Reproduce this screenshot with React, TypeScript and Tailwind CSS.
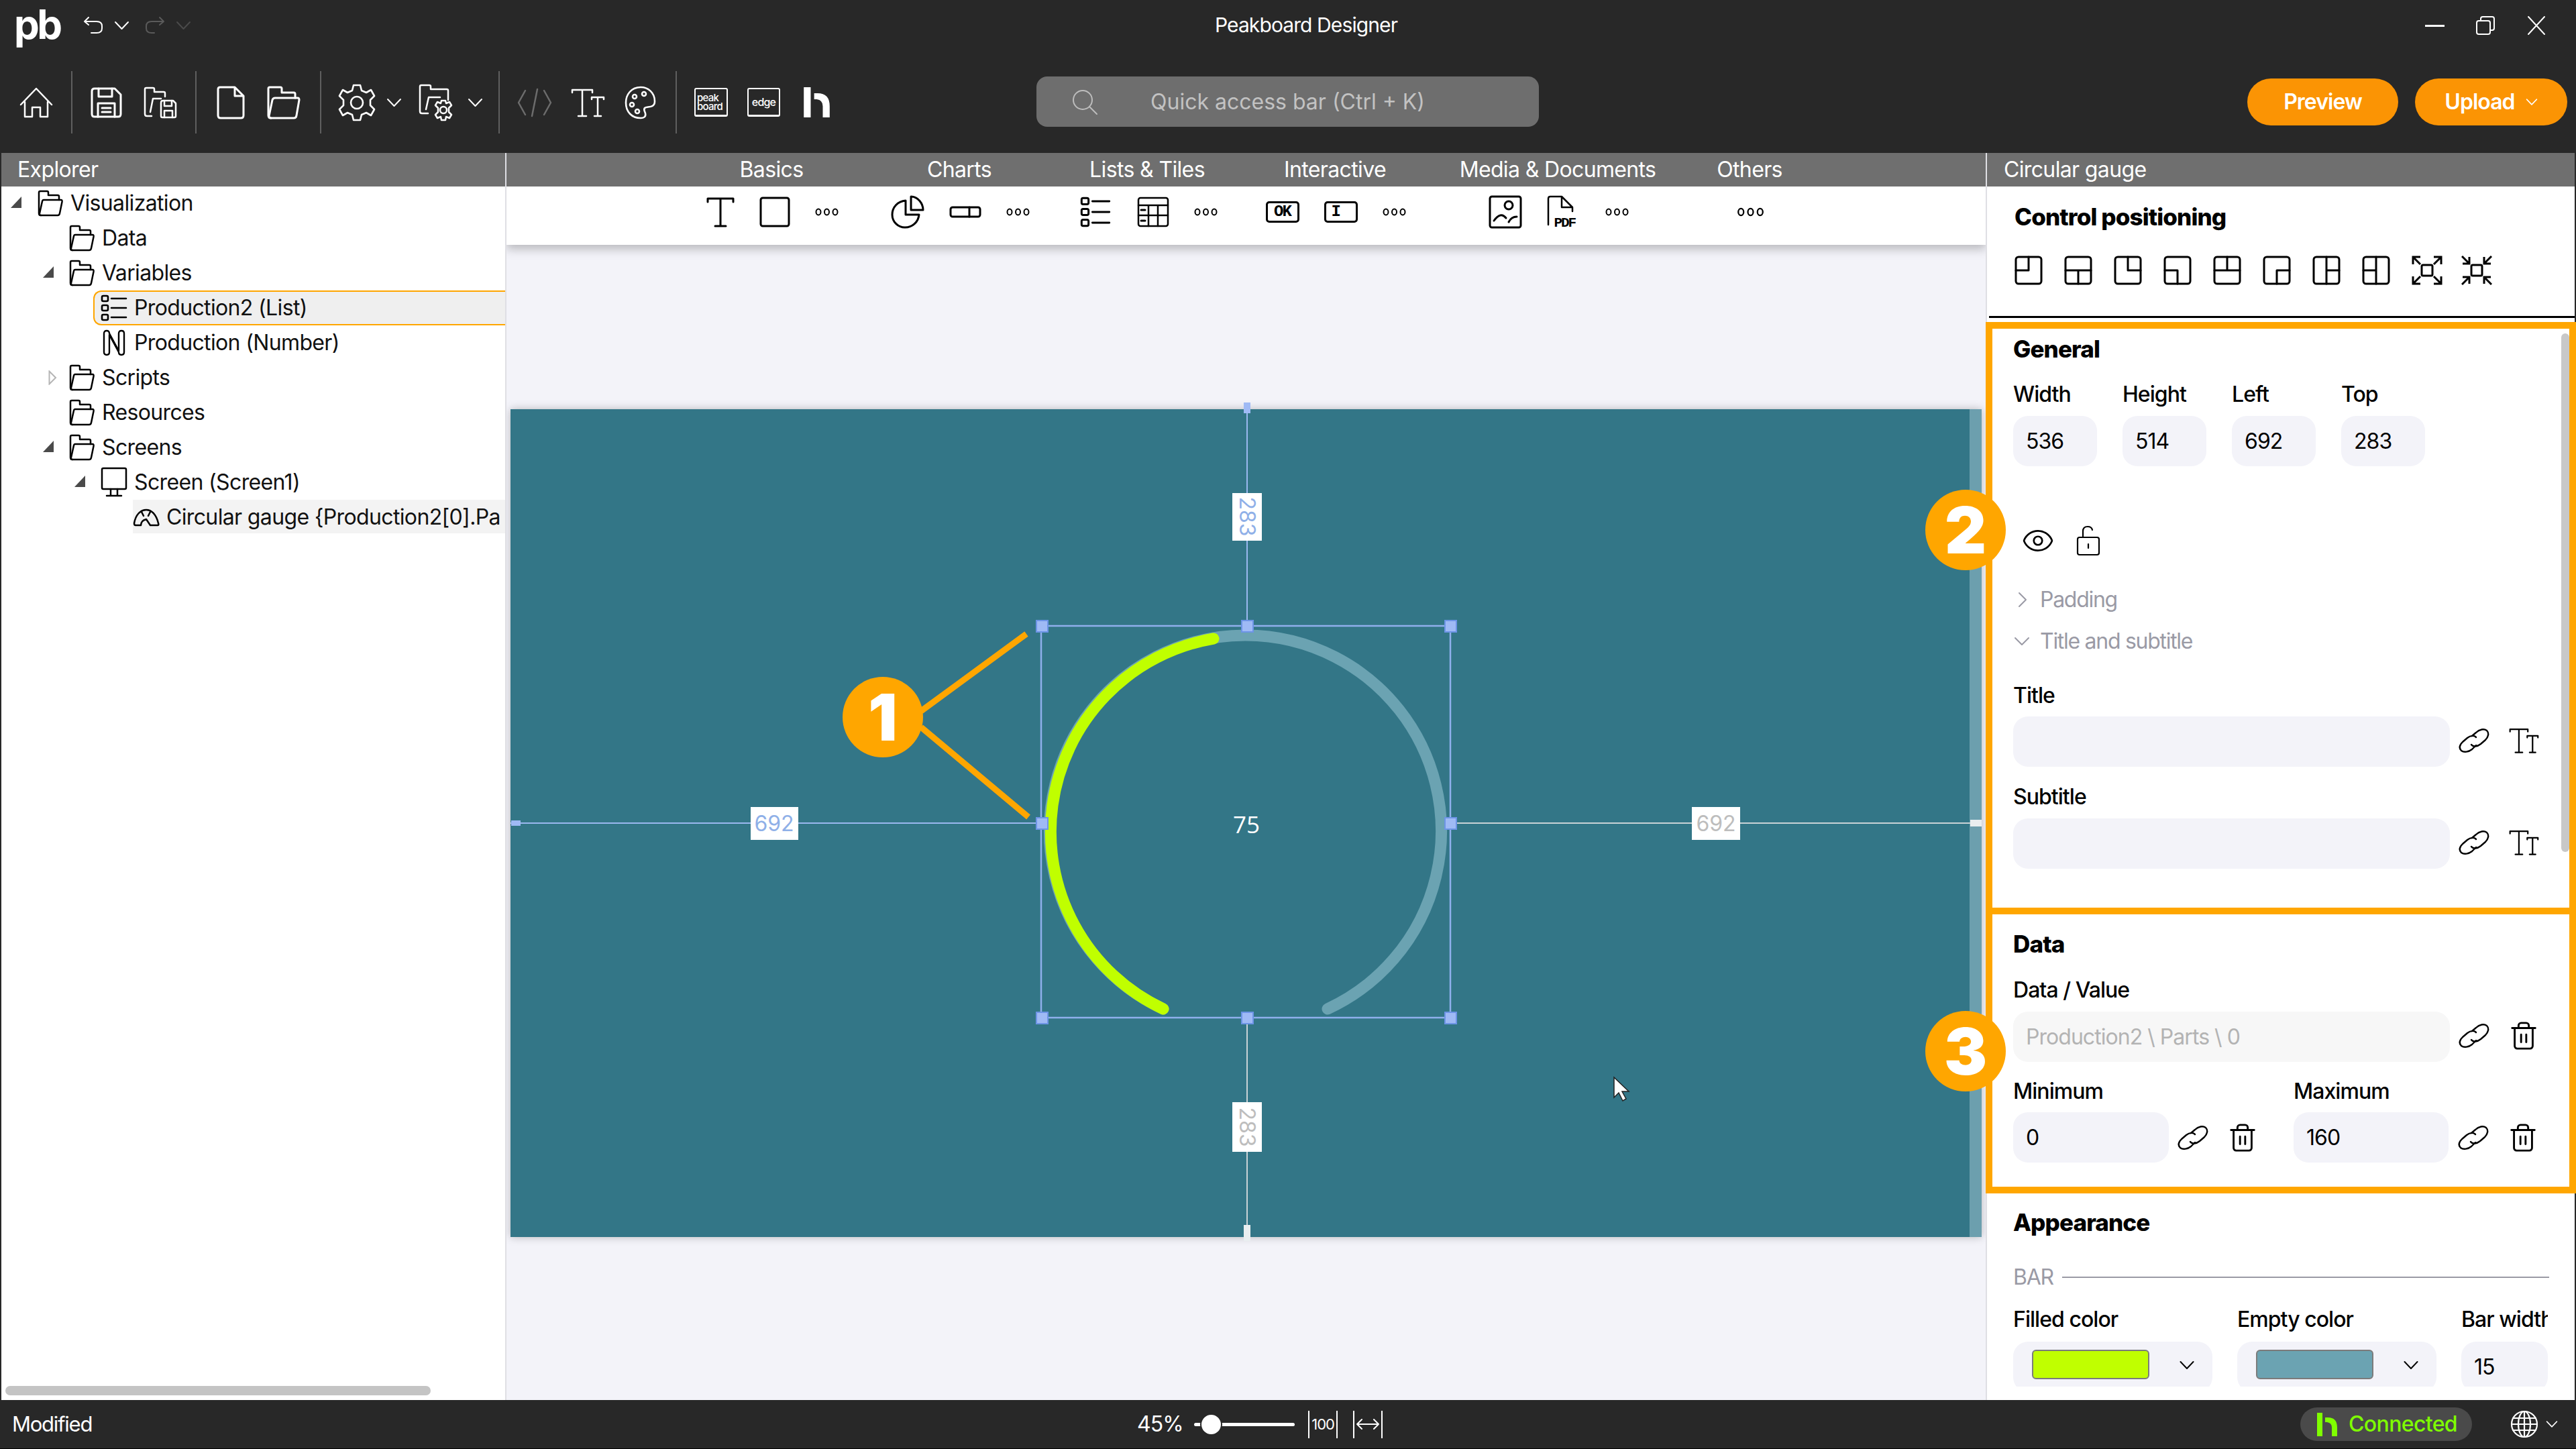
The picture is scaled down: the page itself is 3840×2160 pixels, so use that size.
import type { ReactNode } from "react";
import { Eye, Trash2 } from "lucide-react";

const font = "font-['Inter',sans-serif]";

function Ico({ w, h, vb, sw = 2.5, className, children }: { w: number; h: number; vb?: string; sw?: number; className?: string; children: ReactNode }) {
  return (
    <svg
      width={w}
      height={h}
      viewBox={vb ?? `0 0 ${w} ${h}`}
      fill="none"
      stroke="currentColor"
      strokeWidth={sw}
      strokeLinecap="round"
      strokeLinejoin="round"
      className={`shrink-0 ${className ?? ""}`}
    >
      {children}
    </svg>
  );
}

const Folder = () => (
  <Ico w={40} h={40} vb="0 0 38 40">
    <path d="M5 38Q2 38 2 35V4Q2 2 4 2H14Q16 2 16 4V8H30Q32 8 32 10V15" />
    <path d="M9 15H35Q37 15 36.5 18L33 35Q32.5 38 30 38H5Q2 38 3 35L7 17Q7.5 15 9 15Z" />
  </Ico>
);

const ListGlyph = ({ w = 40, h = 40 }: { w?: number; h?: number }) => (
  <Ico w={w} h={h} vb="0 0 40 40" sw={2.6}>
    <rect x="2" y="2" width="9" height="8" rx="2" />
    <rect x="2" y="16" width="9" height="8" rx="2" />
    <rect x="2" y="30" width="9" height="8" rx="2" />
    <path d="M16 6H38M16 20H38M16 34H38" />
  </Ico>
);

const Tt = ({ w = 52, h = 46 }: { w?: number; h?: number }) => (
  <Ico w={w} h={h} vb="0 0 52 46" sw={2.5}>
    <path d="M3 8V4H33V8M18 4V43M12 43H24M32 18V15H50V18M41 15V43M36 43H46" />
  </Ico>
);

const Chev = ({ w = 23, className }: { w?: number; className?: string }) => (
  <Ico w={w} h={14} vb="0 0 23 14" sw={2} className={className}>
    <path d="M2 2L11.5 12L21 2" />
  </Ico>
);

const Dots = ({ big }: { big?: boolean }) => (
  <Ico w={big ? 47 : 35} h={big ? 16 : 14} vb="0 0 35 14" sw={2}>
    <ellipse cx="5" cy="7" rx="3.5" ry="4.5" />
    <ellipse cx="17.5" cy="7" rx="3.5" ry="4.5" />
    <ellipse cx="30" cy="7" rx="3.5" ry="4.5" />
  </Ico>
);

const HLogo = ({ w, h, className }: { w: number; h: number; className?: string }) => (
  <svg width={w} height={h} viewBox="0 0 30 35" fill="currentColor" className={`shrink-0 ${className ?? ""}`}>
    <rect x="0" y="0" width="8" height="35" />
    <path d="M12 7H16Q30 7 30 22V35H22V22Q22 15 15 14H12Z" />
  </svg>
);

const Sep = ({ className }: { className: string }) => <div className={`h-[93px] w-[2px] shrink-0 bg-[#5f5f5f] ${className}`} />;

function TitleBar() {
  return (
    <div className="relative flex h-[228px] shrink-0 flex-col bg-[#282828] text-white">
      <div className="flex h-[76px] items-start">
        <span className={`${font} ml-[21px] mt-[2px] w-[69px] text-[60px] font-bold leading-[68px] tracking-[-0.06em]`}>pb</span>
        <Ico w={30} h={26} className="ml-[34px] mt-[24px]" sw={2}>
          <path d="M8 2L2 8L8 13M2 8H20Q28 8 28 15V18Q28 25 20 25H12" />
        </Ico>
        <Chev className="ml-[16px] mt-[31px]" />
        <Ico w={30} h={26} className="ml-[23px] mt-[24px] text-[#5a5a5a]" sw={2}>
          <path d="M22 2L28 8L22 13M28 8H10Q2 8 2 15V18Q2 25 10 25H14" />
        </Ico>
        <Chev className="ml-[16px] mt-[31px] text-[#4a4a4a]" />
        <span className={`${font} absolute left-[54px] right-0 top-[17px] text-center text-[30px] leading-[40px] tracking-[-0.03em]`}>Peakboard Designer</span>
        <div className="ml-auto mr-[44px] mt-[23px] flex items-center gap-[46px]">
          <div className="h-[3px] w-[29px] bg-white" />
          <Ico w={30} h={30} sw={2}>
            <rect x="2" y="8" width="20" height="20" rx="3" />
            <path d="M8 8V5Q8 2 11 2H25Q28 2 28 5V19Q28 22 25 22H22" />
          </Ico>
          <Ico w={30} h={30} sw={2}>
            <path d="M3 2L27 28M27 2L3 28" />
          </Ico>
        </div>
      </div>
      <div className="flex h-[152px] items-start">
        <div className="mt-[30px] flex items-center">
          <Ico w={50} h={46} className="ml-[29px]" sw={2.5} vb="0 0 50 46">
            <path d="M2 26L25 2L48 26M8 22V44H19V30H31V44H42V22" />
          </Ico>
          <Sep className="ml-[27px]" />
          <Ico w={47} h={46} className="ml-[27px]" sw={3}>
            <path d="M6 2H36L45 11V40Q45 44 41 44H6Q2 44 2 40V6Q2 2 6 2Z" />
            <path d="M12 2V14H32V2M11 44V24H36V44M17 31H30M17 37H30" />
          </Ico>
          <Ico w={50} h={48} className="ml-[32px]" sw={2.5}>
            <path d="M12 44H5Q2 44 2 41V4Q2 2 4 2H14Q16 2 16 4V8H30Q32 8 32 10V15" />
            <path d="M10 38L14 18H26" />
            <path d="M26 24Q26 21 29 21H44L48 25V44Q48 46 46 46H28Q26 46 26 44Z" />
            <path d="M31 21V29H42V21M31 46V36H43V46" />
          </Ico>
          <Sep className="ml-[27px]" />
          <Ico w={42} h={50} className="ml-[30px]" sw={3}>
            <path d="M5 2H27L40 15V44Q40 48 36 48H6Q2 48 2 44V5Q2 2 5 2ZM27 2V15H40" />
          </Ico>
          <Ico w={50} h={50} className="ml-[33px]" sw={3}>
            <path d="M6 48Q2 48 2 44V4Q2 2 4 2H20Q22 2 22 4V10H40Q42 10 42 12V18" />
            <path d="M12 18H46Q48 18 48 21L44 44Q43.500 48 40 48H6Q3 48 3 45L8 21Q9 18 12 18Z" />
          </Ico>
          <Sep className="ml-[29px]" />
          <Ico w={56} h={56} className="ml-[25px]" sw={2.6}>
            <circle cx="28" cy="28" r="9" />
            <path d="M23 2H33L35 10L42 13L49 9L54 18L48 24V32L54 38L49 47L42 43L35 46L33 54H23L21 46L14 43L7 47L2 38L8 32V24L2 18L7 9L14 13L21 10Z" />
          </Ico>
          <Chev className="ml-[16px]" />
          <Ico w={56} h={56} className="ml-[25px]" sw={2.5}>
            <path d="M14 44H5Q2 44 2 41V4Q2 2 4 2H16Q18 2 18 4V8H42Q44 8 44 10V24" />
            <path d="M11 38L15 20H32" />
            <circle cx="37" cy="39" r="5" />
            <path d="M34 25H40L41 29L46 27L49 32L45 36V42L49 46L46 51L41 49L40 54H34L33 49L28 51L25 46L29 42V36L25 32L28 27L33 29Z" />
          </Ico>
          <Chev className="ml-[17px]" />
          <Sep className="ml-[23px]" />
          <Ico w={52} h={44} className="ml-[26px] text-[#6c6c6c]" sw={2.5}>
            <path d="M12 4L2 22L12 40M40 4L50 22L40 40M30 2L22 42" />
          </Ico>
          <div className="ml-[27px]">
            <Tt />
          </div>
          <Ico w={47} h={50} className="ml-[29px]" sw={2.6}>
            <path d="M24 2C10 2 2 13 2 25C2 39 11 48 24 48C30 48 32 45 31 41C30 37 28 36 30 33C33 30 45 34 45 23C45 10 35 2 24 2Z" />
            <circle cx="15" cy="16" r="3" />
            <circle cx="29" cy="12" r="3" />
            <circle cx="11" cy="28" r="3" />
            <circle cx="19" cy="38" r="3" />
          </Ico>
          <Sep className="ml-[29px]" />
          <div className={`${font} ml-[26px] flex h-[43px] w-[50px] flex-col justify-center rounded-[3px] border-[2px] border-b-[3px] border-white pl-[2px] text-[15px] font-medium leading-[13px] tracking-[-0.05em]`}>
            <span>peak</span>
            <span>board</span>
          </div>
          <div className={`${font} ml-[29px] flex h-[43px] w-[49px] items-center justify-center rounded-[3px] border-[2px] border-b-[3px] border-white text-[16px] font-medium tracking-[-0.05em]`}>edge</div>
          <HLogo w={39} h={45} className="ml-[35px]" />
        </div>
        <div className="absolute left-[1545px] top-[114px] flex h-[75px] w-[749px] items-center rounded-[16px] bg-[#6e6e6e]">
          <Ico w={40} h={40} className="ml-[52px] text-[#bdbdbd]" sw={2}>
            <circle cx="17" cy="17" r="14" />
            <path d="M27 27L38 38" />
          </Ico>
          <span className={`${font} ml-[78px] text-[32px] tracking-[0em] text-[#c2c2c2]`}>Quick access bar (Ctrl + K)</span>
        </div>
        <div className="ml-auto mr-[13px] mt-[41px] flex gap-[25px]">
          <div className={`${font} flex h-[70px] w-[225px] items-center justify-center rounded-[35px] bg-[#fb9404] text-[32px] font-semibold tracking-[-0.03em]`}>Preview</div>
          <div className={`${font} flex h-[70px] w-[227px] items-center justify-center gap-[16px] rounded-[35px] bg-[#fb9404] text-[32px] font-semibold tracking-[-0.03em]`}>
            Upload
            <Chev w={18} />
          </div>
        </div>
      </div>
    </div>
  );
}

type TreeItem = { label: string; level: number; arrow?: "open" | "closed"; icon: ReactNode };

const screenIcon = (
  <Ico w={40} h={46}>
    <rect x="2" y="2" width="36" height="31" rx="2" />
    <path d="M15 33V42M25 33V42M9 43H31" />
  </Ico>
);

const numberIcon = (
  <Ico w={40} h={40} vb="-3 0 40 40" sw={2.4}>
    <path d="M2 6Q2 2 6 2T10 6L24 32V6Q24 2 28 2T32 6V34Q32 38 28 38T24 34L10 8V34Q10 38 6 38T2 34Z" />
  </Ico>
);

const gaugeIcon = (
  <Ico w={40} h={28}>
    <path d="M4 26H12Q12 19 20 17L26 26H37Q39 26 38 23C35 10 28 3 20 3C11 3 4 11 2 23Q2 26 4 26Z" />
    <path d="M13 6L16 12M26 6L23 12" />
  </Ico>
);

const tree: TreeItem[] = [
  { label: "Visualization", level: 0, arrow: "open", icon: <Folder /> },
  { label: "Data", level: 1, icon: <Folder /> },
  { label: "Variables", level: 1, arrow: "open", icon: <Folder /> },
  { label: "Production2 (List)", level: 2, icon: <ListGlyph /> },
  { label: "Production (Number)", level: 2, icon: numberIcon },
  { label: "Scripts", level: 1, arrow: "closed", icon: <Folder /> },
  { label: "Resources", level: 1, icon: <Folder /> },
  { label: "Screens", level: 1, arrow: "open", icon: <Folder /> },
  { label: "Screen (Screen1)", level: 2, arrow: "open", icon: screenIcon },
  { label: "Circular gauge {Production2[0].Pa", level: 3, icon: gaugeIcon },
];

const indents = ["pl-[53px]", "pl-[100px]", "pl-[148px]", "pl-[196px]"];
const arrowPos = ["left-[14px]", "left-[62px]", "left-[109px]", "left-[156px]"];

function TreeRow({ item }: { item: TreeItem }) {
  const selected = item.label.startsWith("Production2");
  const gauge = item.level === 3;
  return (
    <div className={`relative flex h-[52px] items-center overflow-hidden ${indents[item.level]}`}>
      {item.arrow === "open" && (
        <svg width="16" height="18" viewBox="0 0 16 18" className={`absolute top-[16px] ${arrowPos[item.level]}`}>
          <path d="M16 0V17H0Z" fill="#4a4a4a" />
        </svg>
      )}
      {item.arrow === "closed" && (
        <svg width="13" height="22" viewBox="0 0 13 22" className={`absolute top-[15px] ${arrowPos[item.level]} ml-[8px]`}>
          <path d="M1.500 1.500L11 11L1.500 20.500Z" fill="none" stroke="#b5b5b5" strokeWidth="2" />
        </svg>
      )}
      {selected && <div className="absolute bottom-0 left-[137px] right-0 top-0 rounded-l-[12px] border-[2px] border-r-0 border-[#ffa600] bg-[#efefef]" />}
      {gauge && <div className="absolute bottom-[2px] left-[196px] right-0 top-0 bg-[#f3f3f3]" />}
      <div className="relative flex items-center gap-[10px] whitespace-nowrap">
        {item.icon}
        <span className={`${font} text-[32px] leading-[40px] tracking-[-0.02em] text-[#111]`}>{item.label}</span>
      </div>
    </div>
  );
}

function Explorer() {
  return (
    <div className="relative flex w-[751px] shrink-0 flex-col bg-white">
      <div className={`${font} flex h-[50px] items-center bg-[#6f6f6f] pl-[24px] text-[32px] tracking-[-0.02em] text-white`}>Explorer</div>
      <div className="-mt-[1px]">
        {tree.map((t) => (
          <TreeRow key={t.label} item={t} />
        ))}
      </div>
      <div className="mt-auto mb-[7px] ml-[6px] h-[14px] w-[634px] rounded-[7px] bg-[#c4c4c4]" />
    </div>
  );
}

const paletteCols = [
  {
    label: "Basics",
    width: "w-[280px]",
    icons: [
      <Ico key="t" w={42} h={46} sw={3}>
        <path d="M2 8V3H40V8M21 3V44M13 44H29" />
      </Ico>,
      <Ico key="r" w={46} h={46} sw={3}>
        <rect x="2" y="2" width="42" height="42" rx="3" />
      </Ico>,
      <Dots key="d" />,
    ],
  },
  {
    label: "Charts",
    width: "w-[280px]",
    icons: [
      <Ico key="p" w={50} h={50} sw={3}>
        <path d="M22 8C10 9 2 18 2 29C2 40 11 48 21 48C32 48 41 40 42 29H22Z" />
        <path d="M30 2V22H48C48 12 40 2 30 2Z" />
      </Ico>,
      <Ico key="b" w={48} h={18} sw={3}>
        <rect x="2" y="2" width="44" height="14" rx="3" />
        <path d="M30 2V16" />
      </Ico>,
      <Dots key="d" />,
    ],
  },
  {
    label: "Lists & Tiles",
    width: "w-[280px]",
    icons: [
      <ListGlyph key="l" w={50} h={46} />,
      <Ico key="t" w={48} h={46} sw={2.5}>
        <rect x="2" y="2" width="44" height="42" rx="3" />
        <path d="M2 13H46M2 28H46M17 13V44M31 13V44" />
        <path d="M6 20H12M6 36H12" strokeWidth={3} />
      </Ico>,
      <Dots key="d" />,
    ],
  },
  {
    label: "Interactive",
    width: "w-[280px]",
    icons: [
      <div key="ok" className="flex h-[32px] w-[50px] items-center justify-center rounded-[5px] border-[3px] border-black font-['Liberation_Mono',monospace] text-[24px] font-bold tracking-[-0.08em]">OK</div>,
      <div key="i" className="flex h-[32px] w-[50px] items-center rounded-[5px] border-[3px] border-black pl-[8px] font-['Liberation_Mono',monospace] text-[24px] font-bold">I</div>,
      <Dots key="d" />,
    ],
  },
  {
    label: "Media & Documents",
    width: "w-[384px]",
    icons: [
      <Ico key="m" w={50} h={50} sw={3}>
        <rect x="2" y="2" width="46" height="46" rx="3" />
        <circle cx="30" cy="15" r="6" />
        <path d="M8 38Q18 24 26 34M30 40Q34 32 42 32" />
      </Ico>,
      <div key="pdf" className="relative h-[50px] w-[50px]">
        <Ico w={50} h={50} sw={2.5}>
          <path d="M2 44V5Q2 2 5 2H22L38 18V24M22 2V18H38" />
        </Ico>
        <span className="absolute bottom-[-3px] left-[11px] font-['Liberation_Mono',monospace] text-[21px] font-bold leading-[22px] tracking-[-0.1em]">PDF</span>
      </div>,
      <Dots key="d" />,
    ],
  },
  { label: "Others", width: "w-[188px]", icons: [<Dots key="d" big />] },
];

function Canvas() {
  const handles = [
    [1553, 933],
    [1859, 933],
    [2162, 933],
    [1553, 1227],
    [2162, 1227],
    [1553, 1517],
    [1859, 1517],
    [2162, 1517],
  ];
  return (
    <div className="relative ml-[6px] mt-[245px] h-[1234px] w-[2193px] bg-[#337687] shadow-[0_0_12px_rgba(0,0,0,0.25)]">
      <div className="absolute bottom-0 right-0 top-0 w-[18px] bg-[#6c9fae]" />
      <svg className="absolute inset-0 overflow-visible" width="2193" height="1234" viewBox="761 610 2193 1234" fill="none">
        <path d="M1734 1504A292 292 0 1 1 1979 1504" stroke="#6ba3b2" strokeWidth="17" strokeLinecap="round" />
        <path d="M1734 1504A292 292 0 0 1 1809 952" stroke="#c0ff00" strokeWidth="17" strokeLinecap="round" />
        <text x="1858" y="1242" fill="#fff" fontSize="35" textAnchor="middle" fontFamily="Open Sans, sans-serif" fontWeight="400">75</text>

        <path d="M761 1227H1552M1859 610V933" stroke="#9ab8ef" strokeWidth="2" />
        <path d="M2162 1227H2945M1859 1517V1844" stroke="#c9d3d6" strokeWidth="2" />
        <rect x="1552" y="933" width="610" height="584" stroke="#8fb0ec" strokeWidth="2.500" />
        {handles.map(([x, y]) => (
          <rect key={`${x}-${y}`} x={x - 8} y={y - 8} width="17" height="17" fill="#9fbaf5" stroke="#6d94e6" strokeWidth="2" />
        ))}
        <rect x="1854" y="600" width="10" height="16" fill="#9fbaf5" />
        <rect x="762" y="1223" width="14" height="8" fill="#9fbaf5" />
        <rect x="2937" y="1222" width="17" height="10" fill="#e9eef0" />
        <rect x="1854" y="1826" width="10" height="24" fill="#e9eef0" />

        <rect x="1119" y="1203" width="71" height="49" fill="#fff" />
        <text x="1154" y="1239" fill="#8fb0e8" fontSize="32" textAnchor="middle" fontFamily="Inter, sans-serif">692</text>
        <rect x="2522" y="1203" width="72" height="49" fill="#fff" />
        <text x="2558" y="1239" fill="#bdbdbd" fontSize="32" textAnchor="middle" fontFamily="Inter, sans-serif">692</text>
        <rect x="1837" y="735" width="44" height="71" fill="#fff" />
        <text x="1859" y="770" transform="rotate(90 1859 770)" dy="11" fill="#8fb0e8" fontSize="32" textAnchor="middle" fontFamily="Inter, sans-serif">283</text>
        <rect x="1837" y="1643" width="44" height="74" fill="#fff" />
        <text x="1859" y="1680" transform="rotate(90 1859 1680)" dy="11" fill="#bdbdbd" fontSize="32" textAnchor="middle" fontFamily="Inter, sans-serif">283</text>

        <path d="M1373 1060L1530 945M1373 1084L1533 1218" stroke="#ffa600" strokeWidth="9" />
        <path d="M2406 1606V1636L2413 1629L2419 1641L2424 1638L2418 1627H2428Z" fill="#fff" stroke="#222" strokeWidth="1.500" />
      </svg>
    </div>
  );
}

function Center() {
  return (
    <div className="flex min-w-0 flex-1 flex-col overflow-hidden border-x-[2px] border-x-[#dfdfe4] bg-[#f3f3f9]">
      <div className="relative z-10 flex flex-col shadow-[0_6px_14px_rgba(0,0,0,0.25)]">
        <div className="flex h-[50px] bg-[#6f6f6f] pl-[255px]">
          {paletteCols.map((c) => (
            <div key={c.label} className={`${font} flex shrink-0 items-center justify-center whitespace-nowrap text-[32px] tracking-[-0.02em] text-white ${c.width}`}>
              {c.label}
            </div>
          ))}
        </div>
        <div className="flex h-[87px] bg-white pl-[256px]">
          {paletteCols.map((c) => (
            <div key={c.label} className={`flex h-[76px] shrink-0 items-center justify-center gap-[37px] text-black ${c.width}`}>
              {c.icons}
            </div>
          ))}
        </div>
      </div>
      <Canvas />
    </div>
  );
}

const Label = ({ children, className }: { children: ReactNode; className?: string }) => (
  <div className={`${font} flex h-[40px] items-center whitespace-nowrap text-[32px] font-medium tracking-[-0.03em] text-black ${className ?? ""}`}>{children}</div>
);

const Heading = ({ children, className }: { children: ReactNode; className?: string }) => (
  <div className={`${font} flex h-[40px] items-center whitespace-nowrap text-[35px] font-extrabold tracking-[-0.025em] text-black ${className ?? ""}`}>{children}</div>
);

const Field = ({ value, className, muted }: { value?: string; className: string; muted?: boolean }) => (
  <div className={`${font} flex h-[75px] shrink-0 items-center rounded-[22px] pl-[19px] text-[32px] tracking-[-0.03em] ${muted ? "bg-[#f7f7f7] text-[#b3b3b3]" : "bg-[#f3f3f9] text-black"} ${className}`}>{value}</div>
);

const LinkIco = () => (
  <Ico w={46} h={38} sw={2.4} className="text-black">
    <path d="M20 12L26 7C31 2 38 1 42 4C46 8 44 14 40 18L33 24C28 28 22 29 19 25" />
    <path d="M26 14C24 11 18 11 13 15L6 21C2 25 0 30 4 34C8 37 15 36 20 32L26 26" />
  </Ico>
);
const TrashIco = () => <Trash2 size={46} strokeWidth={1.500} className="shrink-0 text-black" />;

const positionPaths = [
  "M21 2V22H2",
  "M2 22H40M21 22V42",
  "M21 2V22H40",
  "M2 22H21V42",
  "M2 22H40M21 2V22",
  "M21 42V22H40",
  "M21 2V42M21 22H40",
  "M21 2V42M2 22H21",
];

function Properties() {
  const fieldsTop = [
    ["Width", "536"],
    ["Height", "514"],
    ["Left", "692"],
    ["Top", "283"],
  ];
  return (
    <div className="relative flex w-[876px] shrink-0 flex-col bg-white">
      <div className={`${font} flex h-[50px] shrink-0 items-center bg-[#6f6f6f] pl-[25px] text-[32px] tracking-[-0.02em] text-white`}>Circular gauge</div>
      <Heading className="ml-[41px] mt-[25px]">Control positioning</Heading>
      <div className="ml-[41px] mt-[38px] flex items-center gap-[32px] text-black">
        {positionPaths.map((d) => (
          <Ico key={d} w={42} h={44} sw={3}>
            <rect x="2" y="2" width="38" height="40" rx="4" />
            <path d={d} />
          </Ico>
        ))}
        <Ico w={46} h={44} sw={3} className="[stroke-linecap:butt] [stroke-linejoin:miter]">
          <path d="M2 13V2H13M33 2H44V13M2 31V42H13M33 42H44V31M3 3L13 13M43 3L33 13M3 41L13 31M43 41L33 31" />
          <rect x="15" y="14" width="16" height="16" rx="2" />
        </Ico>
        <Ico w={46} h={44} className="-ml-[4px] [stroke-linecap:butt] [stroke-linejoin:miter]" sw={3}>
          <path d="M2 12H12V2M44 12H34V2M2 32H12V42M44 32H34V42M1 1L12 12M45 1L34 12M1 43L12 32M45 43L34 32" />
          <rect x="15" y="14" width="16" height="16" rx="2" />
        </Ico>
      </div>
      <div className="ml-[3px] mt-[46px] h-[3px] shrink-0 bg-black" />

      <div className="mb-[20px] min-h-0 flex-1 overflow-hidden pl-[39px]">
        <Heading className="mt-[26px]">General</Heading>
        <div className="mt-[28px] flex gap-[38px]">
          {fieldsTop.map(([l, v]) => (
            <div key={l} className="w-[125px]">
              <Label>{l}</Label>
              <Field value={v} className="mt-[12px] w-[125px]" />
            </div>
          ))}
        </div>
        <div className="mt-[89px] flex h-[43px] items-center gap-[32px] pl-[12px] text-black">
          <Eye size={50} strokeWidth={1.300} />
          <Ico w={36} h={46} sw={2.2}>
            <rect x="2" y="18" width="32" height="26" rx="3" />
            <path d="M10 18V9Q10 2 17 2Q23 2 24 7M18 28V34" />
          </Ico>
        </div>
        <div className="mt-[47px] flex h-[40px] items-center gap-[19px] pl-[7px] text-[#9a9aa5]">
          <Ico w={14} h={24} sw={2}>
            <path d="M2 2L12 12L2 22" />
          </Ico>
          <span className={`${font} text-[32px] tracking-[-0.04em]`}>Padding</span>
        </div>
        <div className="mt-[22px] flex h-[40px] items-center gap-[15px] pl-[1px] text-[#9a9aa5]">
          <Ico w={24} h={14} sw={2}>
            <path d="M2 2L12 12L22 2" />
          </Ico>
          <span className={`${font} text-[32px] tracking-[-0.04em]`}>Title and subtitle</span>
        </div>
        <Label className="mt-[41px]">Title</Label>
        <div className="mt-[11px] flex items-center">
          <Field className="w-[651px]" />
          <div className="-mt-[3px] ml-[13px]"><LinkIco /></div>
          <div className="-mt-[3px] ml-[28px]"><Tt w={46} h={42} /></div>
        </div>
        <Label className="mt-[25px]">Subtitle</Label>
        <div className="mt-[12px] flex items-center">
          <Field className="w-[651px]" />
          <div className="-mt-[3px] ml-[13px]"><LinkIco /></div>
          <div className="-mt-[3px] ml-[28px]"><Tt w={46} h={42} /></div>
        </div>

        <Heading className="mt-[92px]">Data</Heading>
        <Label className="mt-[29px]">Data / Value</Label>
        <div className="mt-[12px] flex items-center">
          <Field muted value="Production2 \ Parts \ 0" className="w-[651px]" />
          <div className="-mt-[3px] ml-[13px]"><LinkIco /></div>
          <div className="-mt-[3px] ml-[28px]"><TrashIco /></div>
        </div>
        <div className="mt-[24px] flex">
          <div className="w-[418px]">
            <Label>Minimum</Label>
            <div className="mt-[11px] flex items-center">
              <Field value="0" className="w-[232px]" />
              <div className="ml-[13px]"><LinkIco /></div>
              <div className="ml-[28px]"><TrashIco /></div>
            </div>
          </div>
          <div>
            <Label>Maximum</Label>
            <div className="mt-[11px] flex items-center">
              <Field value="160" className="w-[231px]" />
              <div className="ml-[14px]"><LinkIco /></div>
              <div className="ml-[28px]"><TrashIco /></div>
            </div>
          </div>
        </div>

        <Heading className="mt-[69px]">Appearance</Heading>
        <div className="mt-[42px] flex h-[40px] w-[799px] items-center gap-[13px]">
          <span className={`${font} text-[32px] tracking-[-0.04em] text-[#9a9aa5]`}>BAR</span>
          <div className="h-[2px] flex-1 bg-[#9a9aa5]" />
        </div>
        <div className="mt-[23px] flex w-[799px] gap-[37px]">
          {[
            ["Filled color", "bg-[#c0ff00]"],
            ["Empty color", "bg-[#6ba3b2]"],
          ].map(([l, c]) => (
            <div key={l} className="w-[297px] shrink-0">
              <Label>{l}</Label>
              <div className="mt-[13px] flex h-[75px] items-start rounded-[22px] bg-[#f3f3f9] pl-[28px] pt-[12px]">
                <div className={`h-[44px] w-[175px] rounded-[6px] border-[2px] border-[#7b7b7b] ${c}`} />
                <Chev w={28} className="ml-[42px] mt-[16px] text-black" />
              </div>
            </div>
          ))}
          <div className="w-[129px] shrink-0 overflow-hidden">
            <Label>Bar width</Label>
            <Field value="15" className="mt-[13px] w-[129px]" />
          </div>
        </div>
      </div>

      <div className="absolute left-[856px] top-[269px] h-[773px] w-[12px] rounded-[6px] bg-[#c8c8c8]" />
      <div className="absolute -left-[2px] -right-[2px] top-[252px] h-[883px] border-[10px] border-[#ffa600]" />
      <div className="absolute -left-[2px] -right-[2px] top-[1125px] h-[426px] border-[10px] border-[#ffa600]" />
    </div>
  );
}

function StatusBar() {
  return (
    <div className={`${font} flex h-[72px] shrink-0 items-center bg-[#282828] text-white`}>
      <div className="w-[1695px] pl-[18px] text-[31px] tracking-[-0.04em]">Modified</div>
      <span className="w-[85px] text-[32px] tracking-[-0.03em]">45%</span>
      <div className="relative h-[5px] w-[150px] rounded-full bg-white">
        <div className="absolute -top-[14px] left-[9px] h-[33px] w-[33px] rounded-full border-[2px] border-[#282828] bg-white" />
      </div>
      <div className="ml-[20px] flex h-[41px] w-[44px] items-center justify-center border-x-[2px] border-white text-[22px] tracking-[-0.05em]">100</div>
      <div className="ml-[23px] flex h-[41px] w-[44px] items-center justify-center border-x-[2px] border-white">
        <Ico w={36} h={20} sw={2}>
          <path d="M2 10H34M9 3L2 10L9 17M27 3L34 10L27 17" />
        </Ico>
      </div>
      <div className="ml-auto flex h-[50px] w-[256px] items-center rounded-[25px] bg-[#4a4a4a] pl-[25px] text-[#7fff00]">
        <HLogo w={30} h={35} />
        <span className="ml-[17px] text-[32px] font-medium tracking-[-0.02em]">Connected</span>
      </div>
      <Ico w={42} h={42} className="ml-[57px]" sw={2.200}>
        <circle cx="21" cy="21" r="19" />
        <ellipse cx="21" cy="21" rx="9" ry="19" />
        <path d="M4 12H38M2 21H40M4 30H38M21 2V40" />
      </Ico>
      <Chev w={18} className="ml-[11px] mr-[27px]" />
    </div>
  );
}

const Badge = ({ n, className }: { n: string; className: string }) => (
  <div className={`${font} absolute flex h-[120px] w-[120px] items-center justify-center rounded-full bg-[#ffa600] text-[96px] font-black leading-none text-white ${className}`}>{n}</div>
);

export default function App() {
  return (
    <div className="relative flex h-[2160px] w-[3840px] flex-col overflow-hidden bg-black">
      <TitleBar />
      <div className="flex min-h-0 flex-1 border-x-[2px] border-x-[#282828]">
        <Explorer />
        <Center />
        <Properties />
      </div>
      <StatusBar />
      <div className="h-px shrink-0 bg-black" />
      <Badge n="1" className="left-[1256px] top-[1009px]" />
      <Badge n="2" className="left-[2870px] top-[730px]" />
      <Badge n="3" className="left-[2870px] top-[1507px]" />
    </div>
  );
}
